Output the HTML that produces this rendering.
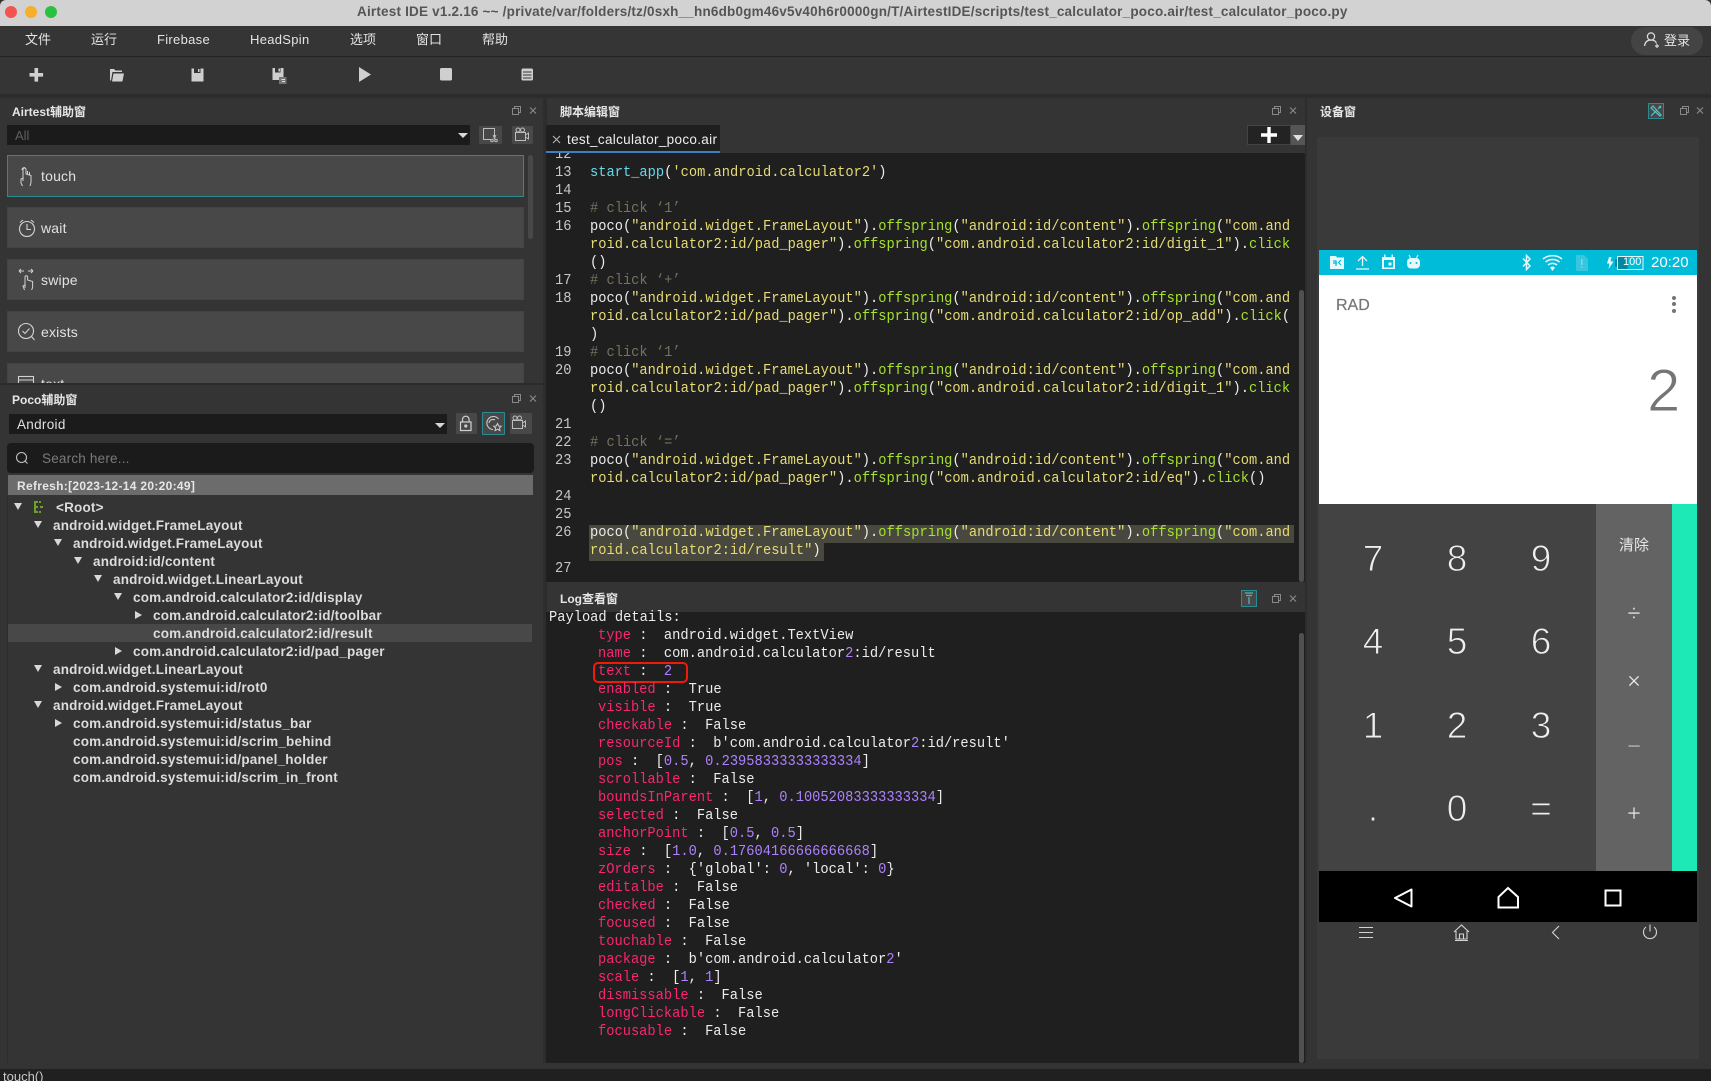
<!DOCTYPE html>
<html lang="zh"><head><meta charset="utf-8"><title>Airtest IDE</title>
<style>
html,body{margin:0;padding:0;background:#333;width:1711px;height:1081px;overflow:hidden}
body{position:relative;font-family:"Liberation Sans","Noto Sans CJK SC",sans-serif;color:#ddd}
.a{position:absolute}
.t{position:absolute;white-space:pre}
svg{position:absolute;overflow:visible}
.m{position:absolute;top:31px;height:18px;line-height:18px;font-size:13px;color:#e4e4e4;white-space:pre}
.h{position:absolute;margin-top:1px;font-size:12px;font-weight:bold;color:#e6e6e6;height:18px;line-height:18px;white-space:pre}
.it{position:absolute;left:7px;width:517px;height:41px;background:#484848;box-sizing:border-box;border:1px solid #444}
.it span{position:absolute;left:33px;top:0;line-height:40px;font-size:14px;color:#e2e2e2;letter-spacing:.2px}
.c{position:absolute;margin-top:1px;font-family:"Liberation Mono",monospace;font-size:15px;transform:scaleX(.915);transform-origin:0 50%;line-height:18px;height:18px;white-space:pre;color:#ececec}
.n{left:555px;color:#c8c8c8}
.l{left:589.5px}
.y{color:#e6db74}.g{color:#a6e22e}.b{color:#66d9ef}.q{color:#75715e}.p{color:#f92672}.v{color:#ae81ff}
.tr{position:absolute;margin-top:1px;font-size:13.5px;letter-spacing:.2px;font-weight:bold;color:#dcdcdc;height:18px;line-height:18px;white-space:pre}
.ar{position:absolute;width:0;height:0}
.dn{border-left:4px solid transparent;border-right:4px solid transparent;border-top:7px solid #d8d8d8}
.rt{border-top:4px solid transparent;border-bottom:4px solid transparent;border-left:7px solid #d8d8d8}
.d{position:absolute;margin-top:1px;width:60px;height:40px;line-height:40px;text-align:center;font-size:37px;color:#eee;-webkit-text-stroke:.9px #434343;font-family:"Liberation Sans",sans-serif}
.o{position:absolute;margin-top:1px;left:1604px;width:60px;height:30px;line-height:30px;text-align:center;color:#e8e8e8;font-size:24px;-webkit-text-stroke:.4px #636363}
.btn{position:absolute;background:#484848;border-radius:1px}
</style></head><body>

<!-- title bar -->
<div class="a" style="left:0;top:0;width:1711px;height:26px;background:#d2d2d2;border-radius:6px 6px 0 0"></div>
<div class="a" style="left:5px;top:6px;width:12px;height:12px;border-radius:50%;background:#f5534f"></div>
<div class="a" style="left:25px;top:6px;width:12px;height:12px;border-radius:50%;background:#f6ae2b"></div>
<div class="a" style="left:45px;top:6px;width:12px;height:12px;border-radius:50%;background:#29c13f"></div>
<div class="t" style="left:357px;top:3px;height:18px;line-height:18px;font-size:13.5px;font-weight:bold;color:#555;letter-spacing:.2px">Airtest IDE v1.2.16 ~~ /private/var/folders/tz/0sxh__hn6db0gm46v5v40h6r0000gn/T/AirtestIDE/scripts/test_calculator_poco.air/test_calculator_poco.py</div>

<!-- menu -->
<div class="a" style="left:0;top:26px;width:1711px;height:30px;background:#353535;border-bottom:1px solid #232323"></div>
<div class="m" style="left:25px">文件</div>
<div class="m" style="left:91px">运行</div>
<div class="m" style="left:157px;letter-spacing:.3px">Firebase</div>
<div class="m" style="left:250px;letter-spacing:.3px">HeadSpin</div>
<div class="m" style="left:350px">选项</div>
<div class="m" style="left:416px">窗口</div>
<div class="m" style="left:482px">帮助</div>
<div class="a" style="left:1631px;top:27px;width:72px;height:28px;border-radius:14px;background:#444"></div>
<svg style="left:1643px;top:31px" width="18" height="18" viewBox="0 0 18 18" fill="none" stroke="#ddd" stroke-width="1.2"><circle cx="8" cy="5.5" r="3.6"/><path d="M1.5 15c.5-4 3-6 6.5-6s5 1.5 5.5 3.5"/><path d="M14 13v4M12 15h4"/></svg>
<div class="t" style="left:1664px;top:31px;height:19px;line-height:19px;font-size:13px;color:#e4e4e4">登录</div>

<!-- toolbar -->
<div class="a" style="left:0;top:57px;width:1711px;height:37px;background:#353535"></div>
<div class="a" style="left:0;top:94px;width:1711px;height:4px;background:#2c2c2c"></div>
<svg style="left:0;top:56px" width="560" height="37" fill="#cfcfcf">
<path d="M34.5 12h3.6v5h5v3.6h-5v5h-3.6v-5h-5V17h5z"/>
<path d="M110 13h4l1.5 1.5h6.5v1.5h-9.5l-1.5 8.5H110z"/><path d="M113.5 17.5h10.500l-1.6 8h-10.4z"/>
<path d="M191.5 12.5h12v13h-12z"/><path fill="#353535" d="M194 12.5h6.5v4.5H194z"/><path d="M198 13h1.5v3H198z"/>
<path d="M272.5 12h11v12h-11z"/><path fill="#353535" d="M275 12h5.5v4.5H275z"/><path d="M278.5 12.5h1.5v3h-1.5z"/>
<rect x="279" y="21" width="7.5" height="7" fill="#777"/><path d="M281 23h4v1h-3zM282 25h3v1h-3z" fill="#ddd"/>
<path d="M359 11l12 7.5-12 7.500z"/>
<rect x="440" y="12" width="12" height="12.5" rx="1.5"/>
<rect x="521.5" y="12.5" width="11.5" height="12" rx="1.5"/><path fill="#353535" d="M523 15.500h8.500v1H523zM523 18.500h8.500v1H523zM523 21.500h8.500v1H523z"/>
</svg>

<!-- Airtest panel -->
<div class="a" style="left:0;top:98px;width:543px;height:971px;background:#343434"></div>
<div class="h" style="left:12px;top:102px">Airtest辅助窗</div>
<svg style="left:512px;top:106px" width="30" height="10" fill="none" stroke="#888" stroke-width="1"><rect x=".5" y="2.5" width="6" height="6"/><path d="M2.5 2.5V.5h6v6h-2"/><path d="M18 1.5l6 6M24 1.5l-6 6" stroke-width="1.2"/></svg>
<div class="a" style="left:7px;top:125px;width:463px;height:20px;background:#1b1b1b"></div>
<div class="t" style="left:15px;top:127px;font-size:13px;line-height:18px;color:#5f5f5f">All</div>
<div class="ar dn" style="left:458px;top:133px;border-left-width:5px;border-right-width:5px;border-top-width:5px"></div>
<div class="btn" style="left:479px;top:126px;width:23px;height:18px"></div>
<div class="btn" style="left:512px;top:126px;width:21px;height:18px"></div>
<svg style="left:482px;top:127px" width="18" height="16" fill="none" stroke="#bdbdbd" stroke-width="1"><path d="M12.5 9.5V1.5H1.5v11h7"/><circle cx="10" cy="13.5" r="1.3"/><circle cx="14" cy="13.5" r="1.3"/><path d="M11 8l2 4M14 8l-2 4"/></svg>
<svg style="left:514px;top:127px" width="18" height="16" fill="none" stroke="#bdbdbd" stroke-width="1"><circle cx="4" cy="3" r="2"/><circle cx="8.5" cy="3" r="2"/><rect x="1.5" y="5.5" width="10" height="8"/><path d="M11.5 8l3-2v6l-3-2"/></svg>
<div class="a" style="left:0;top:150px;width:543px;height:233px;overflow:hidden">
<div class="it" style="top:5px;height:42px;border-color:#2a8b90"><span>touch</span></div>
<div class="it" style="top:57px"><span>wait</span></div>
<div class="it" style="top:109px"><span>swipe</span></div>
<div class="it" style="top:161px"><span>exists</span></div>
<div class="it" style="top:213px"><span>text</span></div>
<div class="a" style="left:528px;top:5px;width:5px;height:84px;border-radius:3px;background:#484848"></div>
<svg style="left:18px;top:15px" width="18" height="22" fill="none" stroke="#d2d2d2" stroke-width="1"><path d="M5 16V4.5a1.500 1.500 0 0 1 3 0V9l5 1.5v7l-1 3.5M5 13l-2 1v4l1.5 3"/><path d="M7 2.5c-2 0-3 1-3 2.5M9.5 9V6M11.5 10V7"/></svg>
<svg style="left:18px;top:69px" width="18" height="20" fill="none" stroke="#d2d2d2" stroke-width="1.1"><circle cx="9" cy="10" r="7.5"/><path d="M9 5v5.5h4M2 3.5L5 1M16 3.5L13 1"/></svg>
<svg style="left:18px;top:118px" width="18" height="24" fill="none" stroke="#d2d2d2" stroke-width="1"><path d="M7 20v-11a1.3 1.3 0 0 1 2.6 0v3l5 1.5v6l-1 2.5M7 17l-2 1 1.5 4"/><path d="M1 3h5M1 3l2-2M1 3l2 2M10 3h5M15 3l-2-2M15 3l-2 2"/></svg>
<svg style="left:17px;top:172px" width="20" height="20" fill="none" stroke="#d2d2d2" stroke-width="1.1"><circle cx="9" cy="9" r="7.5"/><path d="M5.5 9l2.5 2.5 4.5-5M14.5 14.5L17.5 18"/></svg>
<svg style="left:18px;top:226px" width="17" height="16" fill="none" stroke="#d2d2d2" stroke-width="1.1"><rect x=".5" y=".5" width="15" height="14"/><path d="M.5 4h15M3 9h10M3 12h10" stroke-width="1"/></svg>
</div>

<!-- Poco panel -->
<div class="a" style="left:0;top:383px;width:543px;height:2px;background:#2b2b2b"></div>
<div class="h" style="left:12px;top:390px">Poco辅助窗</div>
<svg style="left:512px;top:394px" width="30" height="10" fill="none" stroke="#888" stroke-width="1"><rect x=".5" y="2.5" width="6" height="6"/><path d="M2.5 2.5V.5h6v6h-2"/><path d="M18 1.5l6 6M24 1.5l-6 6" stroke-width="1.2"/></svg>
<div class="a" style="left:9px;top:414px;width:438px;height:20px;background:#1b1b1b"></div>
<div class="t" style="left:17px;top:416px;font-size:13.5px;letter-spacing:.3px;line-height:18px;color:#e0e0e0">Android</div>
<div class="ar dn" style="left:435px;top:423px;border-left-width:5px;border-right-width:5px;border-top-width:5px"></div>
<div class="btn" style="left:456px;top:413px;width:21px;height:21px"></div>
<div class="btn" style="left:482px;top:412px;width:23px;height:23px;box-sizing:border-box;border:1px solid #2a8b90"></div>
<div class="btn" style="left:510px;top:413px;width:22px;height:21px"></div>
<svg style="left:459px;top:415px" width="14" height="18" fill="none" stroke="#d0d0d0" stroke-width="1.2"><path d="M3.5 7V4.5a3.3 3.3 0 0 1 6.6 0V7"/><rect x="1.5" y="7" width="10.5" height="8.5"/><circle cx="6.8" cy="11" r="1" fill="#d0d0d0"/></svg>
<svg style="left:485px;top:415px" width="17" height="17" fill="none" stroke="#c8c8c8" stroke-width="1.1"><path d="M13.5 4A6.5 6.5 0 1 0 8 14.5"/><path d="M4 8a4 4 0 0 1 6-3"/><path d="M12.5 8.5l1.2 2.5 2.5.3-1.8 1.700.5 2.5-2.4-1.2-2.4 1.2.5-2.5-1.8-1.700 2.5-.3z"/></svg>
<svg style="left:511px;top:415px" width="18" height="16" fill="none" stroke="#bdbdbd" stroke-width="1"><circle cx="4" cy="3" r="2"/><circle cx="8.5" cy="3" r="2"/><rect x="1.5" y="5.5" width="10" height="8"/><path d="M11.5 8l3-2v6l-3-2"/></svg>
<div class="a" style="left:7px;top:443px;width:527px;height:30px;background:#1b1b1b;border-radius:4px"></div>
<svg style="left:15px;top:451px" width="15" height="15" fill="none" stroke="#c0c0c0" stroke-width="1.1"><circle cx="6.5" cy="6.5" r="5"/><path d="M10 10l2.5 2.5"/></svg>
<div class="t" style="left:42px;top:450px;font-size:13.5px;letter-spacing:.2px;line-height:18px;color:#7a7a7a">Search here...</div>
<div class="a" style="left:8px;top:475px;width:525px;height:20px;background:#6c6c6c"></div>
<div class="t" style="left:17px;top:477px;font-size:12px;letter-spacing:.3px;font-weight:bold;line-height:18px;color:#e6e6e6">Refresh:[2023-12-14 20:20:49]</div>
<div class="a" style="left:8px;top:624px;width:524px;height:18px;background:#484848"></div>
<div class="a" style="left:7px;top:495px;width:1px;height:574px;background:#2c2c2c"></div>
<svg style="left:33px;top:500px" width="11" height="14" fill="#6aa321"><path d="M1 1h4v2H3v3h2v2H3v3h2v2H1z"/><rect x="6" y="1" width="2" height="2"/><rect x="6" y="11" width="2" height="2"/><rect x="7" y="6" width="3" height="2"/></svg>
<div class="ar dn" style="left:14px;top:503px"></div><div class="tr" style="left:56px;top:498px">&lt;Root&gt;</div>
<div class="ar dn" style="left:34px;top:521px"></div><div class="tr" style="left:53px;top:516px">android.widget.FrameLayout</div>
<div class="ar dn" style="left:54px;top:539px"></div><div class="tr" style="left:73px;top:534px">android.widget.FrameLayout</div>
<div class="ar dn" style="left:74px;top:557px"></div><div class="tr" style="left:93px;top:552px">android:id/content</div>
<div class="ar dn" style="left:94px;top:575px"></div><div class="tr" style="left:113px;top:570px">android.widget.LinearLayout</div>
<div class="ar dn" style="left:114px;top:593px"></div><div class="tr" style="left:133px;top:588px">com.android.calculator2:id/display</div>
<div class="ar rt" style="left:135px;top:611px"></div><div class="tr" style="left:153px;top:606px">com.android.calculator2:id/toolbar</div>
<div class="tr" style="left:153px;top:624px">com.android.calculator2:id/result</div>
<div class="ar rt" style="left:115px;top:647px"></div><div class="tr" style="left:133px;top:642px">com.android.calculator2:id/pad_pager</div>
<div class="ar dn" style="left:34px;top:665px"></div><div class="tr" style="left:53px;top:660px">android.widget.LinearLayout</div>
<div class="ar rt" style="left:55px;top:683px"></div><div class="tr" style="left:73px;top:678px">com.android.systemui:id/rot0</div>
<div class="ar dn" style="left:34px;top:701px"></div><div class="tr" style="left:53px;top:696px">android.widget.FrameLayout</div>
<div class="ar rt" style="left:55px;top:719px"></div><div class="tr" style="left:73px;top:714px">com.android.systemui:id/status_bar</div>
<div class="tr" style="left:73px;top:732px">com.android.systemui:id/scrim_behind</div>
<div class="tr" style="left:73px;top:750px">com.android.systemui:id/panel_holder</div>
<div class="tr" style="left:73px;top:768px">com.android.systemui:id/scrim_in_front</div>

<!-- divider -->
<div class="a" style="left:543px;top:98px;width:4px;height:971px;background:#2d2d2d"></div>

<!-- Editor panel -->
<div class="a" style="left:547px;top:98px;width:758px;height:971px;background:#343434"></div>
<div class="h" style="left:560px;top:102px">脚本编辑窗</div>
<svg style="left:1272px;top:106px" width="30" height="10" fill="none" stroke="#888" stroke-width="1"><rect x=".5" y="2.5" width="6" height="6"/><path d="M2.5 2.5V.5h6v6h-2"/><path d="M18 1.5l6 6M24 1.5l-6 6" stroke-width="1.2"/></svg>
<div class="a" style="left:546px;top:125px;width:174px;height:26px;background:#1f1f1f"></div>
<div class="a" style="left:546px;top:151px;width:174px;height:2px;background:#3b7fc4"></div>
<svg style="left:552px;top:135px" width="9" height="9" fill="none" stroke="#bbb" stroke-width="1"><path d="M1 1l7 7M8 1l-7 7"/></svg>
<div class="t" style="left:567px;top:131px;font-size:13.5px;letter-spacing:.32px;line-height:18px;color:#eee">test_calculator_poco.air</div>
<div class="a" style="left:1247px;top:125px;width:44px;height:20px;background:#232323;box-sizing:border-box;border:1px solid #444"></div>
<div class="a" style="left:1291px;top:125px;width:14px;height:20px;background:#555"></div>
<svg style="left:1261px;top:127px" width="16" height="16" fill="#fff"><path d="M6.3 0h3.4v6.3H16v3.4H9.7V16H6.3V9.7H0V6.3h6.3z"/></svg>
<div class="ar" style="left:1293px;top:135px;border-left:5px solid transparent;border-right:5px solid transparent;border-top:6px solid #e0e0e0"></div>
<div class="a" style="left:546px;top:153px;width:759px;height:429px;background:#1f1f1f;overflow:hidden">
<div class="a" style="left:43px;top:372px;width:705px;height:18px;background:#49483e"></div>
<div class="a" style="left:43px;top:390px;width:235px;height:18px;background:#49483e"></div>
<div class="a" style="left:753px;top:137px;width:5px;height:292px;background:#505050;border-radius:3px"></div>
<div class="c" style="left:9px;top:-8px;color:#c8c8c8">12</div>
</div>
<div class="c n" style="top:163px">13</div><div class="c l" style="top:163px"><span class="b">start_app</span>(<span class="y">'com.android.calculator2'</span>)</div>
<div class="c n" style="top:181px">14</div>
<div class="c n" style="top:199px">15</div><div class="c l q" style="top:199px"># click ‘1’</div>
<div class="c n" style="top:217px">16</div><div class="c l" style="top:217px">poco(<span class="y">"android.widget.FrameLayout"</span>).<span class="g">offspring</span>(<span class="y">"android:id/content"</span>).<span class="g">offspring</span>(<span class="y">"com.and</span></div>
<div class="c l" style="top:235px"><span class="y">roid.calculator2:id/pad_pager"</span>).<span class="g">offspring</span>(<span class="y">"com.android.calculator2:id/digit_1"</span>).<span class="g">click</span></div>
<div class="c l" style="top:253px">()</div>
<div class="c n" style="top:271px">17</div><div class="c l q" style="top:271px"># click ‘+’</div>
<div class="c n" style="top:289px">18</div><div class="c l" style="top:289px">poco(<span class="y">"android.widget.FrameLayout"</span>).<span class="g">offspring</span>(<span class="y">"android:id/content"</span>).<span class="g">offspring</span>(<span class="y">"com.and</span></div>
<div class="c l" style="top:307px"><span class="y">roid.calculator2:id/pad_pager"</span>).<span class="g">offspring</span>(<span class="y">"com.android.calculator2:id/op_add"</span>).<span class="g">click</span>(</div>
<div class="c l" style="top:325px">)</div>
<div class="c n" style="top:343px">19</div><div class="c l q" style="top:343px"># click ‘1’</div>
<div class="c n" style="top:361px">20</div><div class="c l" style="top:361px">poco(<span class="y">"android.widget.FrameLayout"</span>).<span class="g">offspring</span>(<span class="y">"android:id/content"</span>).<span class="g">offspring</span>(<span class="y">"com.and</span></div>
<div class="c l" style="top:379px"><span class="y">roid.calculator2:id/pad_pager"</span>).<span class="g">offspring</span>(<span class="y">"com.android.calculator2:id/digit_1"</span>).<span class="g">click</span></div>
<div class="c l" style="top:397px">()</div>
<div class="c n" style="top:415px">21</div>
<div class="c n" style="top:433px">22</div><div class="c l q" style="top:433px"># click ‘=’</div>
<div class="c n" style="top:451px">23</div><div class="c l" style="top:451px">poco(<span class="y">"android.widget.FrameLayout"</span>).<span class="g">offspring</span>(<span class="y">"android:id/content"</span>).<span class="g">offspring</span>(<span class="y">"com.and</span></div>
<div class="c l" style="top:469px"><span class="y">roid.calculator2:id/pad_pager"</span>).<span class="g">offspring</span>(<span class="y">"com.android.calculator2:id/eq"</span>).<span class="g">click</span>()</div>
<div class="c n" style="top:487px">24</div>
<div class="c n" style="top:505px">25</div>
<div class="c n" style="top:523px">26</div><div class="c l" style="top:523px">poco(<span class="y">"android.widget.FrameLayout"</span>).<span class="g">offspring</span>(<span class="y">"android:id/content"</span>).<span class="g">offspring</span>(<span class="y">"com.and</span></div>
<div class="c l" style="top:541px"><span class="y">roid.calculator2:id/result"</span>)</div>
<div class="c n" style="top:559px">27</div>

<!-- Log panel -->
<div class="h" style="left:560px;top:589px">Log查看窗</div>
<div class="a" style="left:1241px;top:590px;width:16px;height:17px;box-sizing:border-box;border:1px solid #2a8b90;background:#484848"></div>
<svg style="left:1244px;top:592px" width="10" height="13" fill="none" stroke="#4fb3b8" stroke-width="1.3"><path d="M1 1h8M2 3.5h6M5 5v7"/></svg>
<svg style="left:1272px;top:594px" width="30" height="10" fill="none" stroke="#888" stroke-width="1"><rect x=".5" y="2.5" width="6" height="6"/><path d="M2.5 2.5V.5h6v6h-2"/><path d="M18 1.5l6 6M24 1.5l-6 6" stroke-width="1.2"/></svg>
<div class="a" style="left:546px;top:612px;width:759px;height:451px;background:#1f1f1f"></div>
<div class="a" style="left:1299px;top:633px;width:5px;height:430px;background:#505050;border-radius:3px"></div>
<div class="c" style="left:549px;top:608px">Payload details:</div>
<div class="c" style="left:598px;top:626px"><span class="p">type</span> :  android.widget.TextView</div>
<div class="c" style="left:598px;top:644px"><span class="p">name</span> :  com.android.calculator<span class="v">2</span>:id/result</div>
<div class="c" style="left:598px;top:662px"><span class="p">text</span> :  <span class="v">2</span></div>
<div class="a" style="left:593px;top:662px;width:95px;height:21px;box-sizing:border-box;border:2.5px solid #f01a0a;border-radius:5px"></div>
<div class="c" style="left:598px;top:680px"><span class="p">enabled</span> :  True</div>
<div class="c" style="left:598px;top:698px"><span class="p">visible</span> :  True</div>
<div class="c" style="left:598px;top:716px"><span class="p">checkable</span> :  False</div>
<div class="c" style="left:598px;top:734px"><span class="p">resourceId</span> :  b'com.android.calculator<span class="v">2</span>:id/result'</div>
<div class="c" style="left:598px;top:752px"><span class="p">pos</span> :  [<span class="v">0.5</span>, <span class="v">0.23958333333333334</span>]</div>
<div class="c" style="left:598px;top:770px"><span class="p">scrollable</span> :  False</div>
<div class="c" style="left:598px;top:788px"><span class="p">boundsInParent</span> :  [<span class="v">1</span>, <span class="v">0.10052083333333334</span>]</div>
<div class="c" style="left:598px;top:806px"><span class="p">selected</span> :  False</div>
<div class="c" style="left:598px;top:824px"><span class="p">anchorPoint</span> :  [<span class="v">0.5</span>, <span class="v">0.5</span>]</div>
<div class="c" style="left:598px;top:842px"><span class="p">size</span> :  [<span class="v">1.0</span>, <span class="v">0.17604166666666668</span>]</div>
<div class="c" style="left:598px;top:860px"><span class="p">zOrders</span> :  {'global': <span class="v">0</span>, 'local': <span class="v">0</span>}</div>
<div class="c" style="left:598px;top:878px"><span class="p">editalbe</span> :  False</div>
<div class="c" style="left:598px;top:896px"><span class="p">checked</span> :  False</div>
<div class="c" style="left:598px;top:914px"><span class="p">focused</span> :  False</div>
<div class="c" style="left:598px;top:932px"><span class="p">touchable</span> :  False</div>
<div class="c" style="left:598px;top:950px"><span class="p">package</span> :  b'com.android.calculator<span class="v">2</span>'</div>
<div class="c" style="left:598px;top:968px"><span class="p">scale</span> :  [<span class="v">1</span>, <span class="v">1</span>]</div>
<div class="c" style="left:598px;top:986px"><span class="p">dismissable</span> :  False</div>
<div class="c" style="left:598px;top:1004px"><span class="p">longClickable</span> :  False</div>
<div class="c" style="left:598px;top:1022px"><span class="p">focusable</span> :  False</div>

<!-- divider -->
<div class="a" style="left:1305px;top:98px;width:2px;height:971px;background:#2d2d2d"></div>

<!-- Device panel -->
<div class="a" style="left:1307px;top:98px;width:404px;height:971px;background:#343434"></div>
<div class="h" style="left:1320px;top:102px">设备窗</div>
<div class="a" style="left:1648px;top:103px;width:16px;height:16px;box-sizing:border-box;border:1px solid #2a8b90;background:#484848"></div>
<svg style="left:1650px;top:105px" width="12" height="12" fill="none" stroke="#5dbfc4" stroke-width="1.2"><path d="M1 3l2-2 8 9-1 1zM11 1L8 4M7 5l-6 6M9 1l2 2"/></svg>
<svg style="left:1680px;top:106px" width="30" height="10" fill="none" stroke="#888" stroke-width="1"><rect x=".5" y="2.5" width="6" height="6"/><path d="M2.5 2.5V.5h6v6h-2"/><path d="M17 1.5l6 6M23 1.5l-6 6" stroke-width="1.2"/></svg>
<div class="a" style="left:1317px;top:137px;width:382px;height:922px;background:#3a3a3a"></div>
<div class="a" style="left:1319px;top:250px;width:378px;height:25px;background:#00bcd8"></div>
<div class="a" style="left:1319px;top:275px;width:378px;height:229px;background:#fff"></div>
<svg style="left:1319px;top:250px" width="378" height="25" fill="#e6f8fb" stroke="none">
<path d="M11 6h6l1 1.5h7V19H11z"/><path d="M14 13h4M14 11h3v5M22 10l-2.5 2.5 2.5 2.5" stroke="#00bcd8" stroke-width="1.2" fill="none"/>
<path d="M37 19h13M43.5 16V6.5M39 11l4.5-4.5L48 11" fill="none" stroke="#e6f8fb" stroke-width="1.3"/>
<path d="M63 7h13v12H63z"/><path d="M65 4.5h1.5V7H65zM72.5 4.5H74V7h-1.5z"/><path d="M65 10h9v7.5h-9z" fill="#00bcd8"/><path d="M69.5 12.5h3v3h-3z"/>
<rect x="88" y="8" width="13" height="10.5" rx="4"/><path d="M90 5l1.5 3M99 5l-1.5 3" stroke="#e6f8fb" fill="none"/><circle cx="91.5" cy="13" r="1" fill="#00bcd8"/><circle cx="97.5" cy="13" r="1" fill="#00bcd8"/>
<path d="M204 8.5l7 7.5-3.5 3.5V5.5L211 9l-7 7.5" fill="none" stroke="#e6f8fb" stroke-width="1.5"/>
<path d="M224 9a15 15 0 0 1 19 0M226.5 12a11 11 0 0 1 14 0M229 15a7 7 0 0 1 9 0" fill="none" stroke="#e6f8fb" stroke-width="1.5"/><path d="M233.5 21l-2.5-3.5a4 4 0 0 1 5 0z"/>
<path d="M257 5h8l4 4v12h-12z" fill="#36c7df"/><path d="M262 9h1.5v6H262zM262 16.5h1.5V18H262z" fill="#7cd8e9"/>
<path d="M290 7h2.5l-1 4.5h3l-5 7.5 1-5.5h-2.5z"/>
<rect x="296" y="9.5" width="2.5" height="7" fill="#008aa0"/><rect x="298.5" y="6.5" width="10" height="13" fill="#00889e"/><rect x="298.5" y="6.5" width="25.500" height="13" fill="none" stroke="#e6f8fb" stroke-width="1"/>
</svg>
<div class="t" style="left:1623px;top:254px;font-size:11px;line-height:17px;color:#fff">100</div>
<div class="t" style="left:1651px;top:253px;font-size:15px;line-height:20px;color:#fff">20:20</div>
<div class="t" style="left:1336px;top:297px;font-size:16px;line-height:18px;color:#757575;-webkit-text-stroke:.2px #757575">RAD</div>
<div class="a" style="left:1672px;top:296px;width:4px;height:4px;border-radius:50%;background:#757575"></div>
<div class="a" style="left:1672px;top:302px;width:4px;height:4px;border-radius:50%;background:#757575"></div>
<div class="a" style="left:1672px;top:309px;width:4px;height:4px;border-radius:50%;background:#757575"></div>
<div class="t" style="left:1647px;top:356px;font-size:60px;line-height:70px;color:#757575;-webkit-text-stroke:1px #fff">2</div>

<div class="a" style="left:1319px;top:504px;width:277px;height:367px;background:#434343"></div>
<div class="a" style="left:1596px;top:504px;width:76px;height:367px;background:#636363"></div>
<div class="a" style="left:1672px;top:504px;width:25px;height:367px;background:#1de9b6"></div>
<div class="d" style="left:1343px;top:538px">7</div><div class="d" style="left:1427px;top:538px">8</div><div class="d" style="left:1511px;top:538px">9</div>
<div class="d" style="left:1343px;top:621px">4</div><div class="d" style="left:1427px;top:621px">5</div><div class="d" style="left:1511px;top:621px">6</div>
<div class="d" style="left:1343px;top:705px">1</div><div class="d" style="left:1427px;top:705px">2</div><div class="d" style="left:1511px;top:705px">3</div>
<div class="d" style="left:1343px;top:788px">.</div><div class="d" style="left:1427px;top:788px">0</div><div class="d" style="left:1511px;top:788px">=</div>
<div class="o" style="top:530px;font-size:15px;-webkit-text-stroke:0">清除</div>
<div class="o" style="top:598px">÷</div>
<div class="o" style="top:666px">×</div>
<div class="o" style="top:731px;color:#bbb">−</div>
<div class="o" style="top:798px">+</div>

<div class="a" style="left:1319px;top:871px;width:378px;height:51px;background:#000"></div>
<svg style="left:1319px;top:871px" width="378" height="51" fill="none" stroke="#fff" stroke-width="2"><path d="M92.5 18.5v17L76 27z" stroke-linejoin="round"/><path d="M179.5 36.5V26l9.5-9 10 9v10.500z"/><rect x="286.5" y="19.5" width="15" height="15"/></svg>
<svg style="left:1319px;top:921px" width="378" height="26" fill="none" stroke="#d4d4d4" stroke-width="1.1">
<path d="M40 6.5h14M40 11.5h14M40 16.5h14"/>
<path d="M135 11l7.5-7 7.5 7M137 10v8h11v-8M140.5 18v-5h4v5M136 19.5h13"/>
<path d="M240 5l-6.5 6.5L240 18"/>
<path d="M331 3.5v7M327 6a6.5 6.5 0 1 0 8 0"/>
</svg>

<!-- status bar -->
<div class="a" style="left:0;top:1063px;width:1711px;height:6px;background:#333"></div>
<div class="a" style="left:0;top:1069px;width:1711px;height:12px;background:#202020;overflow:hidden">
<div class="t" style="left:3px;top:0;font-size:13px;line-height:16px;color:#c8c8c8">touch()</div>
</div>
</body></html>
